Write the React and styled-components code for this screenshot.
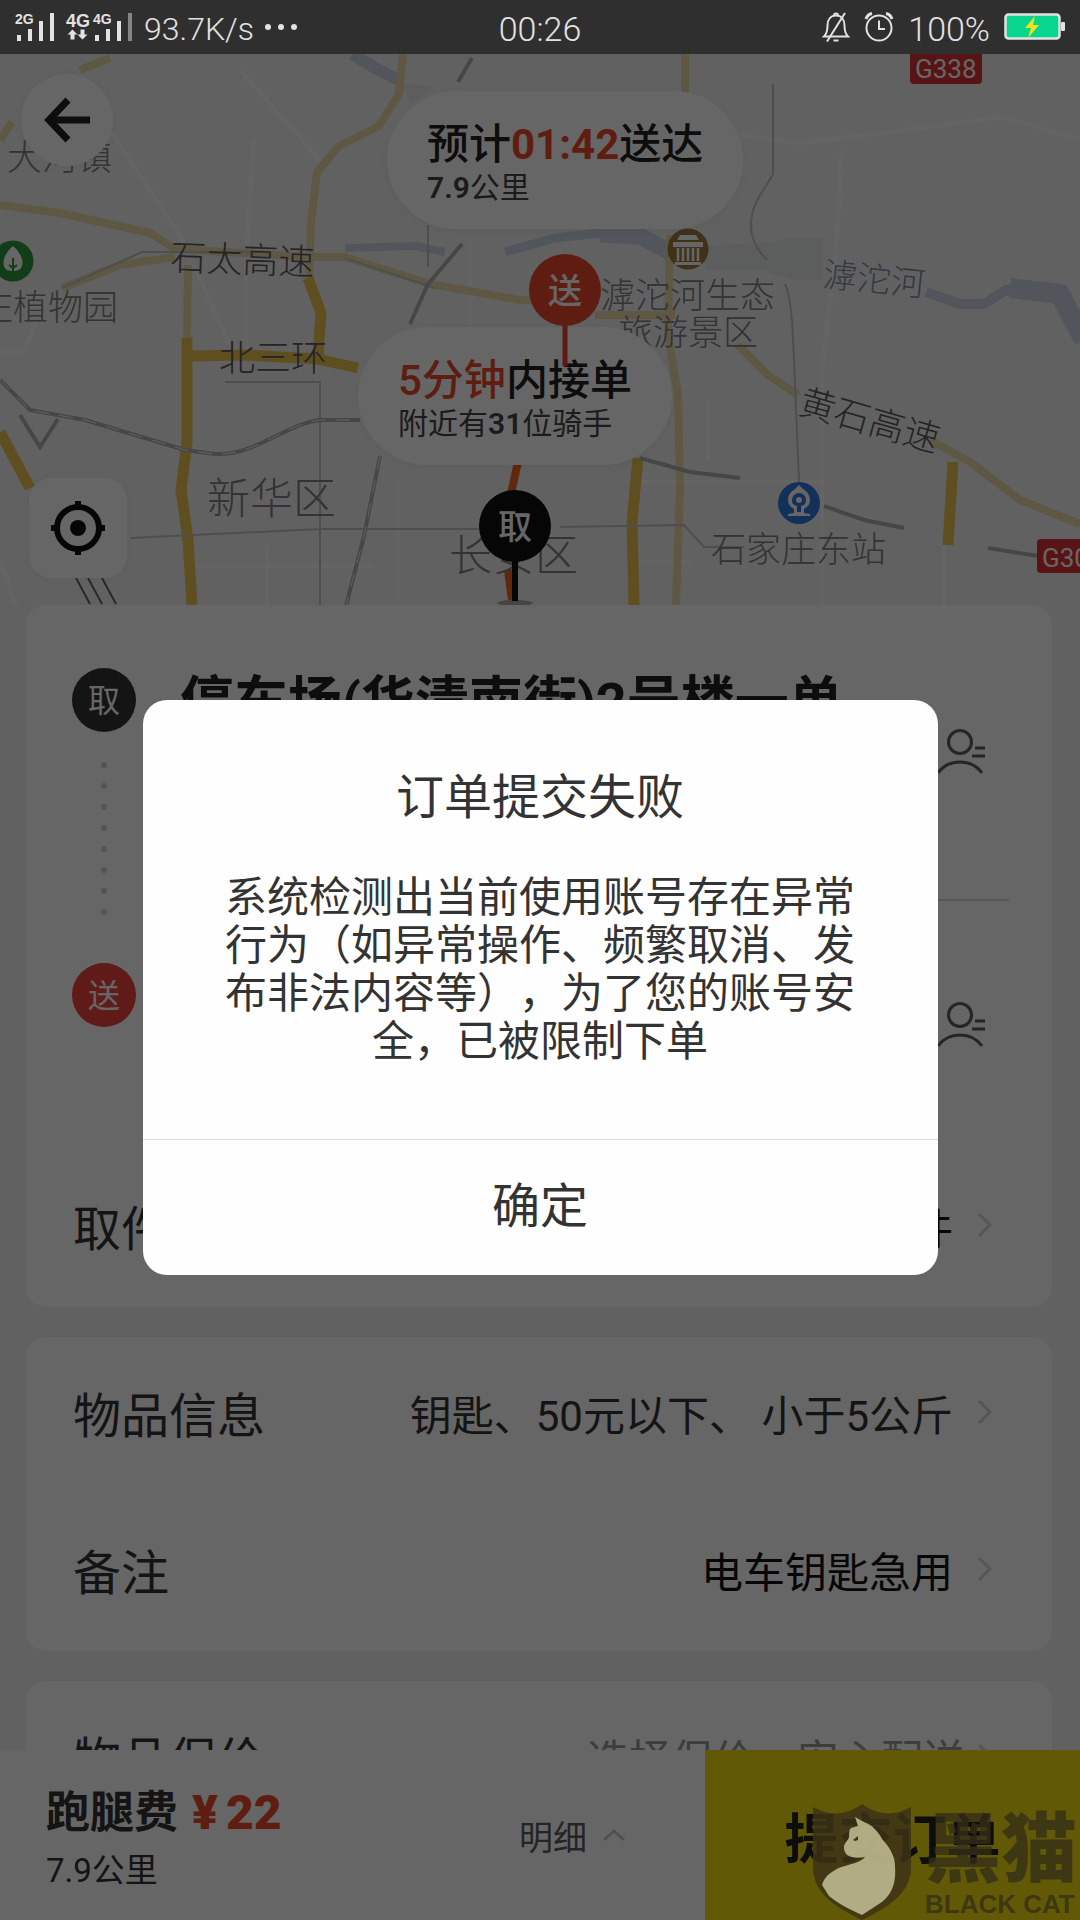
import styled, { createGlobalStyle } from 'styled-components';

const GlobalStyle = createGlobalStyle`
  * { box-sizing: border-box; }
  body {
    margin: 0;
    background: #f2f2f2;
    color: #333;
    font-family: Roboto, "Noto Sans CJK SC", sans-serif;
    text-spacing-trim: space-all;
  }
  button {
    margin: 0;
    padding: 0;
    border: 0;
    background: none;
    color: inherit;
    font: inherit;
    cursor: pointer;
  }
  h1, h2, p { margin: 0; font-weight: 400; }
`;

const Phone = styled.div`
  display: flex;
  flex-direction: column;
  height: 100vh;
  overflow: hidden;
`;

/* ---------- status bar ---------- */

const StatusBar = styled.header`
  display: grid;
  grid-template-columns: 1fr auto 1fr;
  align-items: center;
  flex: none;
  height: 54px;
  padding: 0 14px;
  background: #2f2f2f;
  color: #e2e2e2;
  font-weight: 300;
`;

const StatusGroup = styled.div`
  display: flex;
  align-items: center;
  justify-content: ${(p) => (p.$end ? 'flex-end' : 'flex-start')};
  gap: ${(p) => (p.$end ? '14px' : '10px')};
`;

const StatusText = styled.span`
  padding-top: 4px;
  font-size: ${(p) => (p.$small ? '32px' : '34px')};
  line-height: 50px;
`;

/* ---------- map ---------- */

const Screen = styled.main`
  position: relative;
  display: flex;
  flex-direction: column;
  flex: 1;
  min-height: 0;
`;

const Scroller = styled.div`
  flex: 1;
  min-height: 0;
  overflow: hidden;
`;

const MapArea = styled.section`
  position: relative;
  height: 551px;
  overflow: hidden;
  background: #f3f3f3;
`;

const MapCanvas = styled.svg`
  display: block;
  width: 100%;
  height: 100%;
`;

const PinLayer = styled(MapCanvas)`
  position: absolute;
  inset: 0;
  pointer-events: none;
`;

const Bubble = styled.div`
  position: absolute;
  top: ${(p) => p.$top}px;
  left: ${(p) => p.$left}px;
  display: flex;
  flex-direction: column;
  justify-content: center;
  height: 138px;
  padding: 10px 40px 0;
  border-radius: 69px;
  background: #fff;
  box-shadow: 0 2px 12px rgba(0, 0, 0, 0.06);
  white-space: nowrap;
`;

const BubbleTitle = styled.strong`
  font-size: 42px;
  line-height: 46px;
  font-weight: 500;
  color: #222;

  em {
    font-style: normal;
    font-weight: ${(p) => (p.$heavy ? 700 : 500)};
    color: #ee4a2c;
  }
`;

const BubbleNote = styled.span`
  font-size: 30px;
  line-height: 40px;
  color: #444;

  b { font-weight: 600; }
`;

const MapButton = styled.button`
  position: absolute;
  top: ${(p) => p.$top}px;
  left: ${(p) => p.$left}px;
  display: flex;
  align-items: center;
  justify-content: center;
  width: ${(p) => (p.$round ? 92 : 98)}px;
  height: ${(p) => (p.$round ? 92 : 100)}px;
  border-radius: ${(p) => (p.$round ? '50%' : '22px')};
  background: #fff;
  box-shadow: 0 0 8px rgba(0, 0, 0, 0.06);
`;

/* ---------- order cards ---------- */

const Card = styled.section`
  margin: 0 28px 30px 26px;
  border-radius: 20px;
  background: #fff;
`;

const Route = styled.div`
  display: flex;
  height: 545px;
  padding: 0 43px 0 46px;
`;

const Rail = styled.div`
  display: flex;
  flex-direction: column;
  align-items: center;
  width: 64px;
  padding-top: 63px;
`;

const Badge = styled.span`
  width: 64px;
  height: 64px;
  border-radius: 50%;
  background: ${(p) => (p.$red ? '#f04440' : '#333')};
  color: #fff;
  font-size: 32px;
  line-height: 66px;
  text-align: center;
`;

const Dots = styled.div`
  display: flex;
  flex-direction: column;
  gap: 15px;
  padding: 30px 0 48px;

  i {
    width: 6px;
    height: 6px;
    border-radius: 50%;
    background: #d2d2d2;
  }
`;

const Stops = styled.div`
  flex: 1;
  min-width: 0;
  padding-left: 44px;
`;

const Stop = styled.div`
  display: flex;
  justify-content: space-between;
  align-items: center;
  height: ${(p) => (p.$first ? 296 : 248)}px;
  padding-right: 24px;
  border-bottom: ${(p) => (p.$first ? '2px solid #dcdcdc' : '0')};
`;

const Address = styled.h2`
  align-self: flex-start;
  padding-top: 64px;
  font-size: 54px;
  line-height: 68px;
  font-weight: 700;
  color: #222;
  white-space: nowrap;
`;

const Row = styled.button`
  display: flex;
  align-items: center;
  width: 100%;
  height: 157px;
  padding: 0 60px 7px 47px;
  text-align: left;
`;

const RowLabel = styled.span`
  flex: 1;
  font-size: 48px;
`;

const RowValue = styled.span`
  margin-right: ${(p) => (p.$hint ? 12 : 24)}px;
  font-size: 42px;
  color: ${(p) => (p.$hint ? '#999' : p.$dark ? '#111' : '#333')};
  white-space: pre;
`;

/* ---------- bottom bar ---------- */

const PayBar = styled.footer`
  display: flex;
  flex: none;
  height: 170px;
  background: #fff;
`;

const Fee = styled.div`
  display: flex;
  flex: 1;
  flex-direction: column;
  justify-content: center;
  padding: 8px 0 0 46px;
`;

const FeeTitle = styled.div`
  display: flex;
  align-items: center;
  gap: 14px;
  font-size: 44px;
  line-height: 64px;
  font-weight: 700;

  strong {
    display: flex;
    gap: 8px;
    color: #ee4a2c;
    font-size: 48px;
  }
`;

const FeeNote = styled.span`
  font-size: 33px;
  line-height: 52px;
`;

const Detail = styled.button`
  display: flex;
  align-items: center;
  gap: 16px;
  margin-right: 80px;
  font-size: 34px;
  color: #5a5a5a;
`;

const Submit = styled.button`
  width: 375px;
  background: #f5df10;
  color: #222;
  font-size: 54px;
  font-weight: 700;
`;

/* ---------- dialog ---------- */

const Backdrop = styled.div`
  position: absolute;
  inset: 0;
  display: flex;
  align-items: center;
  justify-content: center;
  background: rgba(0, 0, 0, 0.6);
`;

const Dialog = styled.div`
  width: 795px;
  max-width: 90%;
  border-radius: 24px;
  background: #fefefe;
  overflow: hidden;
  text-align: center;
`;

const DialogTitle = styled.h1`
  padding-top: 70px;
  font-size: 48px;
  line-height: 56px;
`;

const DialogText = styled.p`
  padding: 48px 80px 73px;
  font-size: 42px;
  line-height: 48px;
`;

const DialogButton = styled.button`
  width: 100%;
  height: 136px;
  padding-bottom: 10px;
  border-top: 1px solid #ddd;
  font-size: 48px;
`;

/* ---------- watermark ---------- */

const Watermark = styled.div`
  position: absolute;
  right: 0;
  bottom: 0;
  display: flex;
  align-items: flex-end;
  gap: 14px;
  padding-right: 3px;
  color: rgba(52, 46, 24, 0.78);
  pointer-events: none;
`;

const Brand = styled.div`
  display: flex;
  flex-direction: column;
  font-family: "Liberation Sans", "Noto Sans CJK SC", sans-serif;
  font-weight: 900;

  span { font-size: 76px; line-height: 76px; }
  small { font-size: 26px; line-height: 32px; }
`;

function SignalIcon() {
  return (
    <svg width="120" height="54" viewBox="14 0 120 54" fill="#e2e2e2" fontFamily="Liberation Sans, sans-serif" fontWeight="700">
      <text x="15" y="24" fontSize="14">2G</text>
      <rect x="17" y="35" width="4" height="6" />
      <rect x="28" y="29" width="4" height="12" />
      <rect x="39" y="21" width="4" height="20" />
      <rect x="50" y="13" width="4" height="28" />
      <text x="66" y="27" fontSize="18">4G</text>
      <path d="M72.5 29.500l5 5h-3v5h-4v-5h-3zM82.500 39.500l5-5h-3v-5h-4v5h-3z" />
      <text x="93" y="24" fontSize="14">4G</text>
      <rect x="95" y="35" width="4" height="6" />
      <rect x="106" y="29" width="4" height="12" />
      <rect x="117" y="21" width="4" height="20" />
      <rect x="128" y="13" width="4" height="28" fill="#858585" />
    </svg>
  );
}

function BellOffIcon() {
  return (
    <svg width="28" height="30" viewBox="0 0 28 30" fill="none" stroke="#e2e2e2" strokeWidth="2">
      <path d="M2 24.500h24c-3-3-3.500-6-3.500-11C22.500 7 19 3.500 14 3.500S5.500 7 5.500 13.500c0 5-.5 8-3.500 11z" />
      <path d="M12 3.500a2 2 0 0 1 4 0M11.500 28.500h5" />
      <path d="M23 1L5 29.500" />
    </svg>
  );
}

function AlarmIcon() {
  return (
    <svg width="30" height="30" viewBox="0 0 30 30" fill="none" stroke="#e2e2e2" strokeWidth="2">
      <circle cx="15" cy="16" r="12.500" />
      <path d="M15 8.500V17h6" />
      <path d="M2 7c1-3 3-5 6-5.500M28 7c-1-3-3-5-6-5.500" strokeWidth="3" />
    </svg>
  );
}

function BatteryIcon() {
  return (
    <svg width="62" height="28" viewBox="0 0 62 28">
      <rect x="1.500" y="1.500" width="54" height="24" rx="3" fill="#08d68c" stroke="#e2e2e2" strokeWidth="2.500" />
      <rect x="57" y="9" width="4" height="9" rx="1" fill="#e2e2e2" />
      <path d="M31 3L21 15h6l-3 10 11-13h-6z" fill="#f2e21c" />
    </svg>
  );
}

function Chevron() {
  return (
    <svg width="15" height="26" viewBox="0 0 15 26" fill="none" stroke="#d4d4d4" strokeWidth="3">
      <path d="M2 2l11 11L2 24" />
    </svg>
  );
}

function CaretUp() {
  return (
    <svg width="22" height="14" viewBox="0 0 22 14" fill="none" stroke="#c8c8c8" strokeWidth="3">
      <path d="M1 12L11 3l10 9" />
    </svg>
  );
}

function ContactIcon() {
  return (
    <svg width="48" height="48" viewBox="0 0 48 48" fill="none" stroke="#5c5c5c" strokeWidth="3">
      <circle cx="23" cy="14" r="11.500" />
      <path d="M1 45c5-7 13-11 22-11s17 4 22 11" />
      <path d="M38 20h10M35 28h13" />
    </svg>
  );
}

function CityMap() {
  return (
    <MapCanvas viewBox="0 54 1080 551" preserveAspectRatio="xMidYMid slice" fontFamily="Noto Sans CJK SC, sans-serif">
      <g fill="none" stroke="#cdd7e6" strokeLinejoin="round">
        <path d="M352 54l20 12 26 14" strokeWidth="12" />
        <path d="M345 248l70-2 30 6" strokeWidth="8" />
        <path d="M505 252l50-14 55-6" strokeWidth="9" />
        <path d="M600 234l40 2 30 16 50 4 70 6 28 2" strokeWidth="17" />
        <path d="M926 292l34 12h24l22-14 24-2" strokeWidth="10" />
        <path d="M1010 288l50 6 10 20 14 26" strokeWidth="20" />
      </g>
      <path d="M402 84l34 2-26 18zM706 246l70-4 8-4h38v42h-30l-30-10h-56z" fill="#e4ebe6" />

      <g fill="none" stroke="#fbfbfb" strokeWidth="4">
        <path d="M110 130l70 105 50 110M254 140l-8 120v100M240 70l80 90" />
        <path d="M600 115l140 20 60 8 100-12 100-14 80 22M842 150l-6 100-14 120v235" />
        <path d="M192 566h180M267 545v60M398 480v120M708 400v60M640 482h180M630 562h60M944 545v60" />
        <path d="M0 352h24l12-30M470 240v85M0 560l16 45" />
      </g>

      <g fill="none" stroke="#e8daaa" strokeWidth="8" strokeLinejoin="round">
        <path d="M0 205l60 8 90 20 25 16 135 8h35l85 27 90 16h60" />
        <path d="M62 288l58-23 55-8M80 70l30-12M0 140l12-18" />
        <path d="M403 54l-4 40-20 32-40 20-22 26-6 50-2 60M188 265l-1 80" />
        <path d="M685 54v42M670 235l-2 100 10 60 2 90-4 120" />
        <path d="M595 315h80M738 345l30 30 30 20M930 440l40 22 50 38 60 24" />
      </g>
      <g fill="none" stroke="#ecc452" strokeWidth="11" strokeLinejoin="round">
        <path d="M308 278l13 35-3 42M187 338v104l-6 48 7 50 4 65M187 356l60-1 70 4 41 9" />
        <path d="M0 432l30 56M638 458l-6 64 2 83M953 462l-5 83" />
      </g>

      <g fill="none" stroke="#c4c4c4" strokeWidth="2">
        <path d="M62 288l80-36h120M225 382h95v223M130 538l190-9h160M773 84v90c-8 16-22 28-22 52 0 14 6 24 16 34M785 284c8 16 8 60 10 100l4 98" />
        <path d="M560 527l124-2 20 22h40M428 225v42M345 258l90 30" />
      </g>
      <g fill="none" stroke="#b0b0b0" strokeWidth="4">
        <path d="M0 380l30 30 55 10 100 30 30 4c40 2 70-30 105-34h40M20 415l20 32 18-28M380 456l-16 80-18 70M472 58l-14 24" />
        <path d="M462 244l-34 40-18 40M640 458l50 14 50 6M824 506l40 14 40 8M988 548l50 8" />
      </g>
      <g fill="none" stroke="#f4f4f4" strokeWidth="1" strokeDasharray="14 10">
        <path d="M0 380l30 30 55 10 100 30 30 4c40 2 70-30 105-34h40M380 456l-16 80-18 70" />
      </g>
      <path d="M76 578l14 26M88 578l14 26M102 578l14 26" stroke="#666" strokeWidth="2" />
      <path d="M518 462l-8 36M508 570l4 30" stroke="#f0641e" strokeWidth="8" />

      <g fill="#808080" fontSize="35" fontWeight="300">
        <text x="7" y="170">大河镇</text>
        <text x="-22" y="320">庄植物园</text>
        <text x="600" y="308">滹沱河生态</text>
        <text x="618" y="345">旅游景区</text>
        <text x="711" y="562">石家庄东站</text>
        <text x="822" y="286" fontSize="34" fill="#7f8fa8" transform="rotate(6 822 286)">滹沱河</text>
      </g>
      <g fill="#5a5a5a" fontSize="36" fontWeight="300">
        <text x="170" y="270" transform="rotate(2 170 270)">石太高速</text>
        <text x="219" y="371">北三环</text>
        <text x="797" y="413" transform="rotate(16 797 413)">黄石高速</text>
      </g>
      <g fill="#808080" fontSize="43" fontWeight="300">
        <text x="207" y="514">新华区</text>
        <text x="449" y="571">长安区</text>
      </g>

      <g fontFamily="Roboto, sans-serif" fontSize="26" fill="#fff">
        <rect x="910" y="50" width="72" height="34" rx="4" fill="#dc3036" />
        <text x="915" y="78">G338</text>
        <rect x="1037" y="539" width="80" height="34" rx="4" fill="#dc3036" />
        <text x="1042" y="567">G308</text>
      </g>

      <circle cx="13" cy="261" r="20.500" fill="#2f9a40" />
      <path d="M13 246c7 6 11 14 9 20-1 4-5 5-9 5s-8-1-9-5c-2-6 2-14 9-20z" fill="#fff" />
      <path d="M13 258v18M9 265l4 3 4-3" stroke="#2f9a40" strokeWidth="2" fill="none" />
      <circle cx="688" cy="249" r="20.500" fill="#a07c40" />
      <path d="M677 240l3-5h16l3 5zM673 242h30v5h-30zM675 262h26v3h-26z" fill="#fff" />
      <path d="M678 248v13M683 248v13M688 248v13M693 248v13M698 248v13" stroke="#fff" strokeWidth="2.500" />
      <circle cx="799" cy="503" r="21" fill="#2f78dc" />
      <path d="M788 516h22v-2l-6-1v-4c4-2 6-5 6-9 0-6-4-9-7-11l-4-4-4 4c-3 2-7 5-7 11 0 4 2 7 6 9v4l-6 1z" fill="#fff" />
      <path d="M797 512v-6c-4-1-5-3-5-6a7 7 0 0 1 14 0c0 3-1 5-5 6v6z" fill="#2f78dc" />
      <circle cx="799" cy="500" r="3" fill="#fff" />
    </MapCanvas>
  );
}

function MapPins() {
  return (
    <PinLayer viewBox="0 54 1080 551" preserveAspectRatio="xMidYMid slice" fontFamily="Noto Sans CJK SC, sans-serif" fontSize="34" fontWeight="500">
      <path d="M565 320v46" stroke="#ee3f30" strokeWidth="5" />
      <circle cx="565" cy="290" r="36" fill="#ee4a2c" />
      <text x="565" y="303" fill="#fff" textAnchor="middle">送</text>
      <ellipse cx="515" cy="603" rx="18" ry="3" fill="#aaa" />
      <path d="M515 555v46" stroke="#111" strokeWidth="6" />
      <circle cx="515" cy="526" r="36" fill="#111" />
      <text x="515" y="539" fill="#fff" textAnchor="middle">取</text>
    </PinLayer>
  );
}

function CatShield() {
  return (
    <svg width="98" height="116" viewBox="0 0 98 116">
      <path d="M0 3c18 10 34 8 49-3 15 11 31 13 49 3v60c0 24-18 38-49 53C18 101 0 87 0 63z" fill="#3d3216" fillOpacity=".85" />
      <path d="M42 13l9 5c8 3 14 9 18 17 8 9 13 17 13 27 1 14-1 26-13 36l-20 13c-13-6-25-12-33-19l-7-11c2-6 5-10 10-13 4-3 8-5 13-6 9-3 16-4 20-9-7 1-12 1-16-1-4-2-5-6-5-9 0-4 4-6 5-10 0-3 0-5 1-8 2-2 5-2 8-3z" fill="#c4bf96" fillOpacity=".86" />
      <path d="M40 36l5-4v4l-3 1z" fill="#333" />
    </svg>
  );
}

function OrderRow({ label, value, hint, dark }) {
  return (
    <Row type="button">
      <RowLabel>{label}</RowLabel>
      <RowValue $hint={hint} $dark={dark}>{value}</RowValue>
      <Chevron />
    </Row>
  );
}

function App() {
  return (
    <>
      <GlobalStyle />
      <Phone>
        <StatusBar>
          <StatusGroup>
            <SignalIcon />
            <StatusText $small>93.7K/s</StatusText>
            <svg width="34" height="8" viewBox="0 0 34 8" fill="#e2e2e2">
              <circle cx="4" cy="4" r="3" />
              <circle cx="17" cy="4" r="3" />
              <circle cx="30" cy="4" r="3" />
            </svg>
          </StatusGroup>
          <StatusText>00:26</StatusText>
          <StatusGroup $end>
            <BellOffIcon />
            <AlarmIcon />
            <StatusText>100%</StatusText>
            <BatteryIcon />
          </StatusGroup>
        </StatusBar>

        <Screen>
          <Scroller>
            <MapArea>
              <CityMap />
              <Bubble $top={37} $left={387}>
                <BubbleTitle $heavy>预计<em>01:42</em>送达</BubbleTitle>
                <BubbleNote><b>7.9</b>公里</BubbleNote>
              </Bubble>
              <Bubble $top={273} $left={358}>
                <BubbleTitle><em>5分钟</em>内接单</BubbleTitle>
                <BubbleNote>附近有<b>31</b>位骑手</BubbleNote>
              </Bubble>
              <MapPins />
              <MapButton type="button" aria-label="返回" $round $top={20} $left={21}>
                <svg width="48" height="46" viewBox="0 0 48 46" fill="none" stroke="#222" strokeWidth="7">
                  <path d="M25 3L6 23l19 20M5 23h42" />
                </svg>
              </MapButton>
              <MapButton type="button" aria-label="定位" $top={424} $left={29}>
                <svg width="56" height="56" viewBox="0 0 56 56" fill="none" stroke="#111" strokeWidth="6">
                  <circle cx="28" cy="28" r="21" />
                  <circle cx="28" cy="28" r="8" fill="#111" stroke="none" />
                  <path d="M28 1v8M28 47v8M1 28h8M47 28h8" />
                </svg>
              </MapButton>
            </MapArea>

            <Card>
              <Route>
                <Rail>
                  <Badge>取</Badge>
                  <Dots>
                    <i /><i /><i /><i /><i /><i /><i /><i />
                  </Dots>
                  <Badge $red>送</Badge>
                </Rail>
                <Stops>
                  <Stop $first>
                    <Address>停车场(华清南街)2号楼一单</Address>
                    <ContactIcon />
                  </Stop>
                  <Stop>
                    <span />
                    <ContactIcon />
                  </Stop>
                </Stops>
              </Route>
              <OrderRow label="取件时间" value="立即取件" dark />
            </Card>

            <Card>
              <OrderRow label="物品信息" value="钥匙、50元以下、 小于5公斤" />
              <OrderRow label="备注" value="电车钥匙急用" dark />
            </Card>

            <Card>
              <OrderRow label="物品保价" value="选择保价，安心配送" hint />
            </Card>
          </Scroller>

          <PayBar>
            <Fee>
              <FeeTitle>
                跑腿费
                <strong><span>¥</span><span>22</span></strong>
              </FeeTitle>
              <FeeNote>7.9公里</FeeNote>
            </Fee>
            <Detail type="button">
              明细
              <CaretUp />
            </Detail>
            <Submit type="button">提交订单</Submit>
          </PayBar>

          <Backdrop>
            <Dialog role="alertdialog" aria-labelledby="fail-title" aria-describedby="fail-text">
              <DialogTitle id="fail-title">订单提交失败</DialogTitle>
              <DialogText id="fail-text">
                系统检测出当前使用账号存在异常行为（如异常操作、频繁取消、发布非法内容等），为了您的账号安全，已被限制下单
              </DialogText>
              <DialogButton type="button">确定</DialogButton>
            </Dialog>
          </Backdrop>

          <Watermark>
            <CatShield />
            <Brand>
              <span>黑猫</span>
              <small>BLACK CAT</small>
            </Brand>
          </Watermark>
        </Screen>
      </Phone>
    </>
  );
}

export default App;
